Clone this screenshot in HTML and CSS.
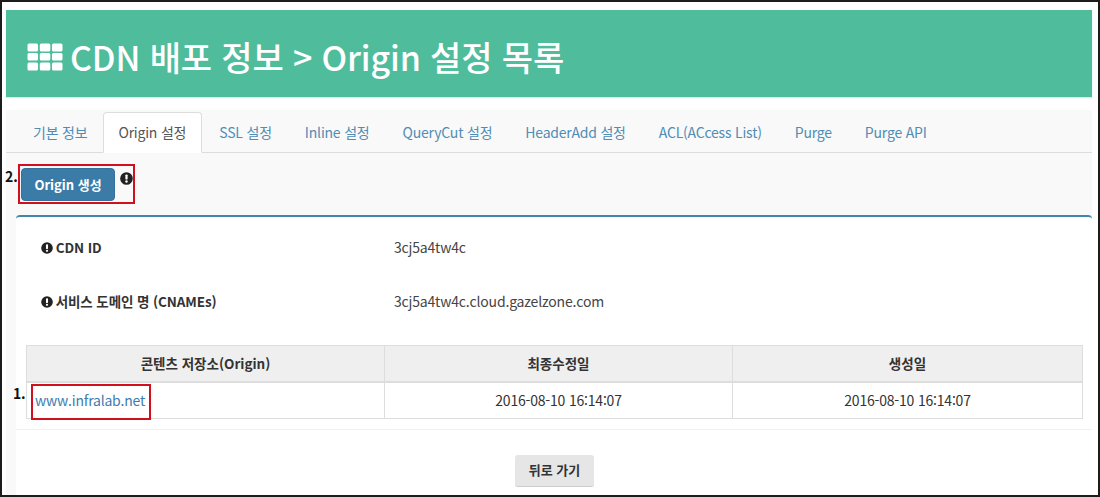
FILE: index.html
```html
<!DOCTYPE html>
<html lang="ko">
<head>
<meta charset="utf-8">
<title>CDN 배포 정보 &gt; Origin 설정 목록</title>
<link rel="stylesheet" href="styles.css">
</head>
<body>
<div class="frame">
  <header class="banner">
    <svg class="th-icon" width="36" height="28" viewBox="0 0 36 28" aria-hidden="true">
      <g fill="#fff">
        <rect x="0.5" y="0.5" width="10.5" height="8" rx="1.5"/><rect x="12.8" y="0.5" width="10.5" height="8" rx="1.5"/><rect x="25" y="0.5" width="10.5" height="8" rx="1.5"/>
        <rect x="0.5" y="10" width="10.5" height="7.6" rx="1.5"/><rect x="12.8" y="10" width="10.5" height="7.6" rx="1.5"/><rect x="25" y="10" width="10.5" height="7.6" rx="1.5"/>
        <rect x="0.5" y="19.5" width="10.5" height="8" rx="1.5"/><rect x="12.8" y="19.5" width="10.5" height="8" rx="1.5"/><rect x="25" y="19.5" width="10.5" height="8" rx="1.5"/>
      </g>
    </svg>
    <h1 class="title">CDN 배포 정보 &gt; Origin 설정 목록</h1>
  </header>

  <main class="panel">
    <nav class="tabs">
      <a class="tab">기본 정보</a>
      <a class="tab active">Origin 설정</a>
      <a class="tab">SSL 설정</a>
      <a class="tab">Inline 설정</a>
      <a class="tab">QueryCut 설정</a>
      <a class="tab">HeaderAdd 설정</a>
      <a class="tab">ACL(ACcess List)</a>
      <a class="tab">Purge</a>
      <a class="tab">Purge API</a>
    </nav>

    <div class="toolbar">
      <span class="note note-two">2.</span>
      <div class="red-box toolbar-box">
        <button class="btn-primary" type="button">Origin 생성</button>
        <svg class="info info-top" width="13" height="13" viewBox="0 0 14 14" aria-hidden="true"><circle cx="7" cy="7" r="6.8" fill="#222"/><rect x="5.8" y="2.6" width="2.4" height="5.6" rx="1" fill="#fff"/><circle cx="7" cy="10.3" r="1.3" fill="#fff"/></svg>
      </div>
    </div>

    <section class="card">
      <div class="field field-first">
        <div class="field-label">
          <svg class="info" width="12" height="12" viewBox="0 0 14 14" aria-hidden="true"><circle cx="7" cy="7" r="6.8" fill="#222"/><rect x="5.8" y="2.6" width="2.4" height="5.6" rx="1" fill="#fff"/><circle cx="7" cy="10.3" r="1.3" fill="#fff"/></svg>
          CDN ID
        </div>
        <div class="field-value">3cj5a4tw4c</div>
      </div>
      <div class="field">
        <div class="field-label">
          <svg class="info" width="12" height="12" viewBox="0 0 14 14" aria-hidden="true"><circle cx="7" cy="7" r="6.8" fill="#222"/><rect x="5.8" y="2.6" width="2.4" height="5.6" rx="1" fill="#fff"/><circle cx="7" cy="10.3" r="1.3" fill="#fff"/></svg>
          서비스 도메인 명 (CNAMEs)
        </div>
        <div class="field-value">3cj5a4tw4c.cloud.gazelzone.com</div>
      </div>

      <table class="origin-table">
        <colgroup><col class="col-a"><col class="col-b"><col class="col-c"></colgroup>
        <thead>
          <tr><th>콘텐츠 저장소(Origin)</th><th>최종수정일</th><th>생성일</th></tr>
        </thead>
        <tbody>
          <tr>
            <td class="cell-origin">
              <span class="note note-one">1.</span>
              <span class="red-box link-box"><a class="link">www.infralab.net</a></span>
            </td>
            <td>2016-08-10 16:14:07</td>
            <td>2016-08-10 16:14:07</td>
          </tr>
        </tbody>
      </table>

      <div class="footer-row">
        <button class="btn-default" type="button">뒤로 가기</button>
      </div>
    </section>
  </main>
</div>
</body>
</html>
```
FILE: styles.css
```css
* { box-sizing: border-box; }
html, body { margin: 0; padding: 0; background: #fff; }
body {
  font-family: "Noto Sans CJK KR", "Noto Sans", sans-serif;
  font-size: 14px;
  color: #333;
}
.frame {
  width: 1100px;
  height: 497px;
  border: 2px solid #1c1c1c;
  padding: 8px 6px 0 4px;
  overflow: hidden;
}
.banner {
  height: 87px;
  background: #4fbc9c;
  display: flex;
  align-items: center;
  padding: 7px 0 0 21px;
  gap: 7px;
  box-shadow: 0 1px 1px #d8ebe5;
}
.th-icon { flex: none; }
.title {
  margin: 0;
  color: #fff;
  font-size: 34px;
  font-weight: 500;
  line-height: 40px;
  letter-spacing: -0.14px;
  white-space: nowrap;
}
.panel {
  margin-top: 13px;
  background: #f9f9f9;
  height: 385px;
}
.tabs {
  display: flex;
  gap: 3px;
  padding: 2px 0 0 12px;
  height: 43px;
  border-bottom: 1px solid #ddd;
}
.tab {
  height: 41px;
  padding: 0 15px;
  line-height: 40px;
  font-size: 14px;
  color: #4f8db5;
  letter-spacing: -0.2px;
  white-space: nowrap;
}
.tab:first-child { padding-right: 13px; }
.tab.active {
  background: #fff;
  color: #555;
  border: 1px solid #ddd;
  border-bottom-color: #fff;
  border-radius: 4px 4px 0 0;
  padding: 0 15px 0 14px;
  margin-right: -1px;
  line-height: 38px;
}
.toolbar {
  position: relative;
  height: 62px;
  padding: 11px 0 0 12px;
}
.note {
  position: absolute;
  color: #111;
  font-weight: 700;
  font-size: 14px;
  line-height: 16px;
}
.note-two { left: -1px; top: 15px; }
.note-one { left: -14px; top: 2px; }
.red-box { border: 2px solid #d0101c; }
.toolbar-box {
  width: 117px;
  height: 40px;
  padding: 2px 0 0 1px;
  display: flex;
  align-items: flex-start;
  gap: 5px;
}
.btn-primary {
  width: 94px;
  height: 33px;
  padding: 0;
  background: #3a7ba8;
  border: 1px solid #35719b;
  border-radius: 4px;
  color: #fff;
  font: 700 13px/20px "Noto Sans CJK KR", "Noto Sans", sans-serif;
}
.info { flex: none; vertical-align: -1px; margin-right: -1px; }
.info-top { margin-top: 4px; }
.card {
  margin-left: 10px;
  height: 280px;
  background: #fff;
  border-top: 2px solid #3f87ad;
  border-radius: 4px 4px 0 0;
  padding: 0 10px;
}
.field {
  display: flex;
  height: 54px;
  align-items: center;
  padding-left: 15px;
}
.field-first { margin-top: 3px; }
.field-label {
  width: 353px;
  font-weight: 700;
  font-size: 13.5px;
  color: #333;
  letter-spacing: -0.1px;
}
.field-value { color: #444; font-size: 14px; letter-spacing: -0.18px; }
.origin-table {
  margin-top: 17px;
  width: 1056px;
  table-layout: fixed;
  border-collapse: collapse;
  border: 1px solid #ddd;
  font-size: 14px;
}
.col-a { width: 358px; }
.col-b { width: 348px; }
.col-c { width: 350px; }
.origin-table th {
  height: 36px;
  background: #efefef;
  border: 1px solid #ddd;
  border-bottom-width: 2px;
  font-size: 13.5px;
  font-weight: 700;
  color: #333;
  padding: 0;
  text-align: center;
}
.origin-table td {
  height: 35px;
  border: 1px solid #ddd;
  padding: 0;
  text-align: center;
  color: #333;
  letter-spacing: -0.2px;
}
.origin-table td.cell-origin {
  position: relative;
  text-align: left;
  padding: 1px 0 0 4px;
}
.link-box {
  display: block;
  width: 120px;
  height: 36px;
  margin-bottom: -2px;
  padding-left: 2px;
  line-height: 29px;
}
.link { color: #3c7cb0; }
.footer-row {
  margin: 10px -10px 0;
  padding-top: 25px;
  border-top: 1px solid #f0f0f0;
  display: flex;
  justify-content: center;
}
.btn-default {
  width: 79px;
  height: 32px;
  padding: 0;
  margin-left: 1px;
  background: #e6e6e6;
  border: none;
  border-bottom: 1px solid #ccc;
  border-radius: 3px;
  color: #333;
  font: 700 13px/20px "Noto Sans CJK KR", "Noto Sans", sans-serif;
}
```
